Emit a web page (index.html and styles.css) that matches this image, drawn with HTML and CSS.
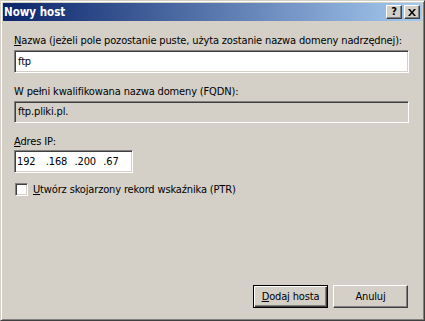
FILE: index.html
```html
<!DOCTYPE html>
<html>
<head>
<meta charset="utf-8">
<link rel="stylesheet" href="styles.css">
</head>
<body>
<div class="window">
  <div class="titlebar">
    <span class="title">Nowy host</span>
    <div class="caption-buttons">
      <span class="cap-btn">?</span>
      <span class="cap-btn close">
        <svg width="8" height="7" viewBox="0 0 8 7"><path d="M0 0h2l2 2.5L6 0h2L5 3.5 8 7H6L4 4.5 2 7H0l3-3.5z" fill="#000"/></svg>
      </span>
    </div>
  </div>
  <div class="content">
    <div class="label l1"><u>N</u>azwa (jeżeli pole pozostanie puste, użyta zostanie nazwa domeny nadrzędnej):</div>
    <div class="edit wide">ftp</div>
    <div class="label l2">W pełni kwalifikowana nazwa domeny (FQDN):</div>
    <div class="edit wide readonly">ftp.pliki.pl.</div>
    <div class="label l3"><u>A</u>dres IP:</div>
    <div class="edit ip"><span>192</span><span>.168</span><span>.200</span><span>.67</span></div>
    <div class="check-row">
      <span class="checkbox"></span>
      <span class="check-label"><u>U</u>twórz skojarzony rekord wskaźnika (PTR)</span>
    </div>
    <div class="spacer"></div>
    <div class="buttons">
      <div class="btn default"><span><u>D</u>odaj hosta</span></div>
      <div class="btn"><span>Anuluj</span></div>
    </div>
  </div>
</div>
</body>
</html>
```
FILE: styles.css
```css
html, body {
  margin: 0;
  padding: 0;
  background: #D4D0C8;
}
body {
  font-family: "DejaVu Sans Condensed", "DejaVu Sans", Tahoma, sans-serif;
  font-stretch: condensed;
  font-size: 11px;
  letter-spacing: -0.15px;
  color: #000;
}
.window {
  width: 425px;
  height: 321px;
  box-sizing: border-box;
  border: 1px solid;
  border-color: #D4D0C8 #404040 #404040 #D4D0C8;
  box-shadow: inset 1px 1px #FFFFFF, inset -1px -1px #808080;
  padding: 2px;
  display: flex;
  flex-direction: column;
  background: #D4D0C8;
}
.titlebar {
  height: 18px;
  background: linear-gradient(to right, #0A246A, #A6CAF0);
  display: flex;
  align-items: center;
  justify-content: space-between;
  padding: 0 2px 0 1px;
}
.title {
  color: #fff;
  font-weight: bold;
  font-size: 11.5px;
  letter-spacing: 0;
  line-height: 18px;
}
.caption-buttons {
  display: flex;
  gap: 2px;
}
.cap-btn {
  width: 16px;
  height: 14px;
  box-sizing: border-box;
  background: #D4D0C8;
  border: 1px solid;
  border-color: #FFFFFF #404040 #404040 #FFFFFF;
  box-shadow: inset -1px -1px #808080;
  display: flex;
  align-items: center;
  justify-content: center;
  font-weight: bold;
  font-size: 11px;
  line-height: 12px;
}
.content {
  flex: 1;
  display: flex;
  flex-direction: column;
  padding: 13px 12px 10px 11px;
}
.label {
  line-height: 13px;
  height: 13px;
  white-space: nowrap;
}
.edit {
  box-sizing: border-box;
  border: 1px solid;
  border-color: #808080 #FFFFFF #FFFFFF #808080;
  box-shadow: inset 1px 1px #404040, inset -1px -1px #D4D0C8;
  background: #fff;
  height: 23px;
  line-height: 21px;
  padding-left: 3px;
  margin-top: 3px;
}
.wide { width: 395px; }
.readonly { background: #D4D0C8; height: 22px; line-height: 20px; }
.l2 { margin-top: 12px; }
.l3 { margin-top: 12px; }
.ip {
  width: 119px;
  display: flex;
  padding-left: 2px;
  margin-top: 2px;
}
.ip span { width: 29px; }
.check-row {
  display: flex;
  align-items: center;
  margin-top: 10px;
  height: 13px;
}
.checkbox {
  width: 13px;
  height: 13px;
  box-sizing: border-box;
  border: 1px solid;
  border-color: #808080 #FFFFFF #FFFFFF #808080;
  box-shadow: inset 1px 1px #404040, inset -1px -1px #D4D0C8;
  background: #fff;
  margin-left: 1px;
}
.check-label {
  margin-left: 5px;
}
.spacer { flex: 1; }
.buttons {
  display: flex;
  justify-content: flex-end;
  gap: 5px;
  padding-right: 2px;
}
.btn {
  width: 75px;
  height: 23px;
  box-sizing: border-box;
  border: 1px solid;
  border-color: #FFFFFF #404040 #404040 #FFFFFF;
  box-shadow: inset -1px -1px #808080;
  display: flex;
  align-items: center;
  justify-content: center;
}
.btn.default {
  border: 1px solid #000;
  box-shadow: inset 1px 1px #FFFFFF, inset -1px -1px #404040, inset -2px -2px #808080;
}
```
